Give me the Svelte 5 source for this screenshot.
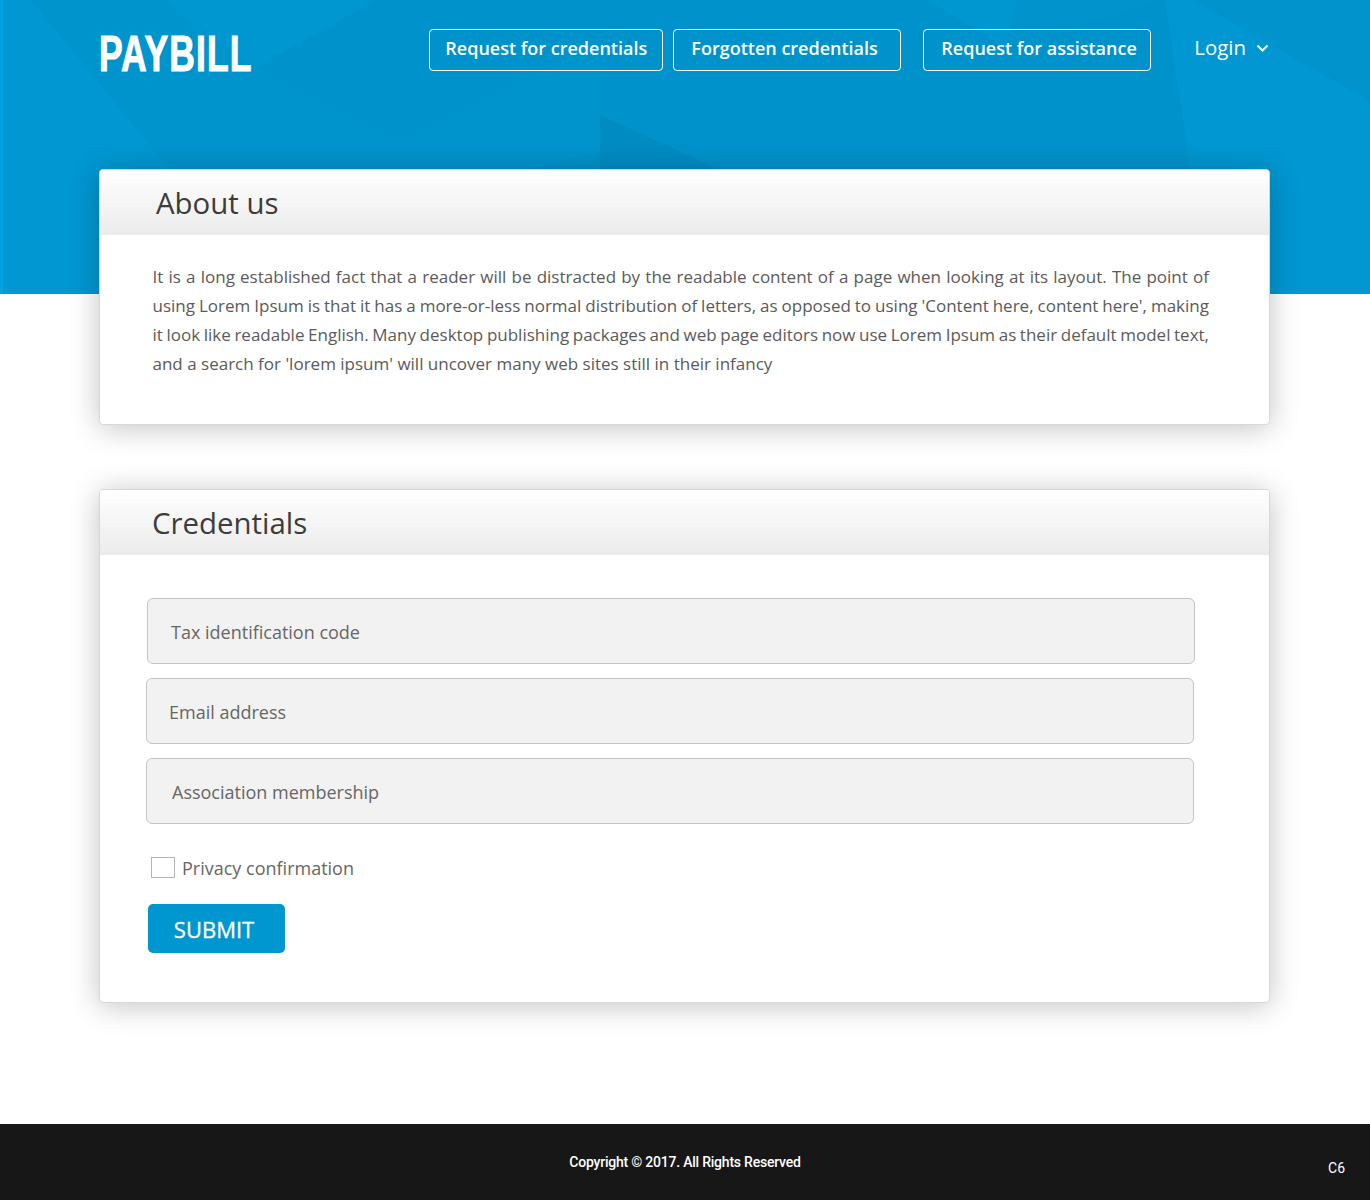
<script>
  const navLinks = [
    { label: "Request for credentials", cls: "one" },
    { label: "Forgotten credentials", cls: "two" },
    { label: "Request for assistance", cls: "three" }
  ];
  const fields = [
    { label: "Tax identification code", cls: "tax" },
    { label: "Email address", cls: "email" },
    { label: "Association membership", cls: "assoc" }
  ];
  // the paragraph breaks at fixed places, so each line is its own block
  const aboutLines = [
    "It is a long established fact that a reader will be distracted by the readable content of a page when looking at its layout. The point of",
    "using Lorem Ipsum is that it has a more-or-less normal distribution of letters, as opposed to using 'Content here, content here', making",
    "it look like readable English. Many desktop publishing packages and web page editors now use Lorem Ipsum as their default model text,",
    "and a search for 'lorem ipsum' will uncover many web sites still in their infancy"
  ];
  // facets of the low-poly header background
  const facets = [
    { p: "31,0 172,172 189,294 600,294 600,0", o: 0.04 },
    { p: "163,0 255,68 377,0", o: -0.02 },
    { p: "255,68 377,0 600,0 600,40 400,140", o: 0.015 },
    { p: "600,0 1165,0 1198,222 1198,294 600,294", o: 0.06 },
    { p: "927,0 1006,48 1017,0", o: -0.035 },
    { p: "1017,0 1006,48 1165,0", o: -0.01 },
    { p: "1193,0 1370,101 1370,0", o: 0.05 },
    { p: "600,115 720,170 600,170", o: 0.08 },
    { p: "405,196 600,152 600,294 430,294", o: 0.03 }
  ];
</script>

<div class="page">
  <div class="hero">
    <svg class="facets" viewBox="0 0 1370 294" preserveAspectRatio="none" aria-hidden="true">
      {#each facets as f}
        <polygon points={f.p} fill={f.o < 0 ? "#00b4f0" : "#00456b"} fill-opacity={Math.abs(f.o) * (f.o < 0 ? 4 : 1)} />
      {/each}
    </svg>
    <header class="bar">
      <div class="logo"><span>PAYBILL</span></div>
      <nav class="links">
        {#each navLinks as link}
          <a class="pill {link.cls}" href="#top">{link.label}</a>
        {/each}
        <a class="login" href="#top">
          Login
          <svg width="13" height="9" viewBox="0 0 13 9" aria-hidden="true">
            <path d="M1.5 1.5 L6.5 6.5 L11.5 1.5" fill="none" stroke="#fff" stroke-width="2" />
          </svg>
        </a>
      </nav>
    </header>
  </div>

  <main class="content">
    <section class="card about">
      <h2>About us</h2>
      <p>
        {#each aboutLines as line}
          <span class="line">{line}</span>
        {/each}
      </p>
    </section>

    <section class="card creds">
      <h2>Credentials</h2>
      <form class="form" onsubmit={(e) => e.preventDefault()}>
        {#each fields as field}
          <input class="field {field.cls}" type="text" placeholder={field.label} />
        {/each}
        <label class="privacy">
          <input type="checkbox" />
          <span>Privacy confirmation</span>
        </label>
        <button type="submit">SUBMIT</button>
      </form>
    </section>
  </main>

  <footer class="foot">
    <span class="copy">Copyright © 2017. All Rights Reserved</span>
    <span class="ver">C6</span>
  </footer>
</div>

<style>
  :global(body) {
    margin: 0;
    background: #fff;
    font-family: "Open Sans", sans-serif;
  }
  .page {
    display: flex;
    flex-direction: column;
    min-height: 1200px;
  }
  .hero {
    position: relative;
    height: 294px;
    background: #0097d2;
    border-left: 3px solid #00a2e2;
    box-sizing: border-box;
    overflow: hidden;
  }
  .facets {
    position: absolute;
    top: 0;
    left: -3px;
    width: 1370px;
    height: 294px;
  }
  .bar {
    position: relative;
    display: flex;
    justify-content: space-between;
    padding: 29px 101px 0 96px;
  }
  .logo {
    height: 42px;
    display: flex;
    align-items: center;
  }
  .logo span {
    display: block;
    width: 152px;
    font-family: "Liberation Sans", sans-serif;
    font-weight: 700;
    font-size: 50px;
    line-height: 42px;
    color: #fff;
    -webkit-text-stroke: 1px #fff;
    letter-spacing: 1.5px;
    white-space: nowrap;
    transform: scaleX(0.71);
    transform-origin: left center;
    margin-top: 8px;
  }
  .links {
    display: flex;
    align-items: flex-start;
    font-weight: 600;
  }
  .pill {
    box-sizing: border-box;
    height: 42px;
    display: flex;
    align-items: center;
    border: 1px solid #fff;
    border-radius: 4px;
    color: #fff;
    font-size: 18px;
    text-decoration: none;
    white-space: nowrap;
    padding-bottom: 5px;
  }
  .one { width: 234px; padding-left: 15px; margin-right: 10px; }
  .two { width: 228px; padding-left: 17px; margin-right: 22px; }
  .three { width: 228px; padding-left: 17px; margin-right: 43px; }
  .login {
    display: flex;
    align-items: center;
    gap: 10px;
    height: 38px;
    margin-top: -1px;
    color: #fff;
    font-size: 20.4px;
    font-weight: 400;
    text-decoration: none;
  }
  .login svg { margin-top: 2px; }
  .content {
    position: relative;
    margin: -125px 100px 0 99px;
    display: flex;
    flex-direction: column;
    gap: 64px;
  }
  .card {
    box-sizing: border-box;
    background: #fff;
    border: 1px solid #d8d8d8;
    border-radius: 4px;
    box-shadow: 0 3px 30px rgba(0, 0, 0, 0.24);
    overflow: hidden;
  }
  .about { height: 256px; }
  .creds { height: 514px; }
  h2 {
    margin: 0;
    height: 65px;
    box-sizing: border-box;
    background: linear-gradient(#fff, #ebebeb);
    color: #3c3c3c;
    font-size: 29.4px;
    font-weight: 400;
    line-height: 66px;
  }
  .about h2 { padding-left: 56px; }
  .creds h2 { padding-left: 52px; }
  p {
    margin: 0;
    padding: 27px 60px 0 52.5px;
    font-size: 17px;
    line-height: 29px;
    color: #5a5a5a;
  }
  .line {
    display: block;
    word-spacing: -2px;
    text-align: justify;
    text-align-last: justify;
  }
  .line:last-child {
    word-spacing: 0;
    text-align-last: left;
  }
  .form {
    display: flex;
    flex-direction: column;
    align-items: flex-start;
    padding: 43px 0 0 46px;
  }
  .field {
    box-sizing: border-box;
    width: 1048px;
    height: 66px;
    margin-bottom: 14px;
    padding-top: 2px;
    border: 1px solid #c4c4c4;
    border-radius: 6px;
    background: #f2f2f2;
    font-family: inherit;
    font-size: 18px;
    color: #666;
    outline: none;
  }
  .field::placeholder {
    color: #666;
    opacity: 1;
  }
  .tax { margin-left: 1px; padding-left: 23px; }
  .email { padding-left: 22px; }
  .assoc { padding-left: 25px; }
  .privacy {
    display: flex;
    align-items: center;
    gap: 7px;
    margin: 16px 0 0 5px;
    font-size: 18px;
    color: #666;
  }
  .privacy span { margin-top: 2px; }
  .privacy input {
    appearance: none;
    box-sizing: border-box;
    width: 24px;
    height: 21px;
    margin: 0;
    border: 1px solid #b4b4b4;
    background: #fff;
  }
  button {
    box-sizing: border-box;
    width: 137px;
    height: 49px;
    margin: 24px 0 0 2px;
    padding: 0 5px 0 0;
    border: 0;
    border-radius: 5px;
    background: #0096cf;
    color: #fff;
    -webkit-text-stroke: 0.3px #fff;
    font-family: inherit;
    font-size: 22px;
    font-weight: 500;
  }
  .foot {
    position: relative;
    margin-top: auto;
    height: 76px;
    background: #171717;
    color: #fff;
    font-family: Roboto, sans-serif;
    font-size: 14px;
    letter-spacing: -0.22px;
    font-weight: 500;
    display: flex;
    justify-content: center;
    padding-top: 30px;
    box-sizing: border-box;
  }
  .ver {
    position: absolute;
    right: 25px;
    top: 36px;
    font-weight: 400;
    letter-spacing: 0;
  }
</style>
